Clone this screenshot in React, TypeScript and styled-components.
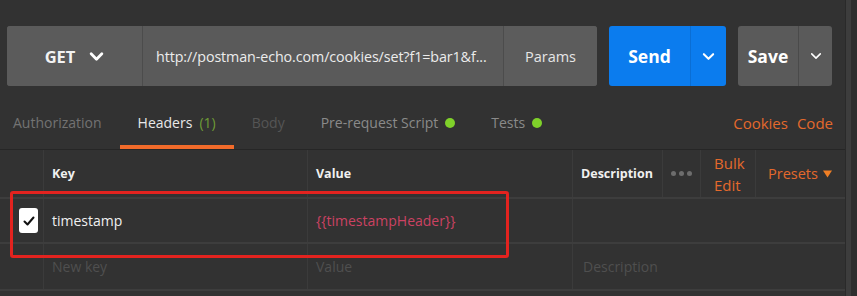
import React from 'react';
import styled, { createGlobalStyle } from 'styled-components';

const Global = createGlobalStyle`
  html, body {
    margin: 0;
    padding: 0;
    background: #333333;
  }
  * { box-sizing: border-box; }
`;

const Page = styled('div')`
  width: 857px;
  height: 296px;
  overflow: hidden;
  display: flex;
  background: #323232;
  font-family: "Open Sans", "Liberation Sans", sans-serif;
`;

const Main = styled('div')`
  flex: 1;
  position: relative;
  display: flex;
  flex-direction: column;
`;

const ScrollTrack = styled('div')`
  width: 6px;
  background: #3d3d3d;
  border-left: 1px solid #2a2a2a;
`;

const Edge = styled('div')`
  width: 6px;
  background: #2e2e2e;
`;

// REQUEST BAR
const RequestBar = styled('div')`
  display: flex;
  height: 60px;
  margin: 26px 0 0 7px;
  gap: 12px;
`;

const UrlGroup = styled('div')`
  display: flex;
  width: 590px;
  border-radius: 3px;
  overflow: hidden;
  background: #5a5a5a;
`;

const Method = styled('div')`
  width: 136px;
  display: flex;
  align-items: center;
  justify-content: center;
  gap: 14px;
  color: #f2f2f2;
  font-weight: 700;
  font-size: 16.5px;
  border-right: 1px solid #4c4c4c;
  background: #5b5b5b;
`;

const Url = styled('div')`
  flex: 1;
  display: flex;
  align-items: center;
  padding-left: 13px;
  color: #ececec;
  font-size: 14.3px;
  white-space: nowrap;
  overflow: hidden;
  letter-spacing: -0.1px;
`;

const Params = styled('div')`
  width: 94px;
  display: flex;
  align-items: center;
  justify-content: center;
  color: #e6e6e6;
  font-size: 14.5px;
  border-left: 1px solid #4c4c4c;
  background: #5c5c5c;
`;

const SplitButton = styled('div')<{ $bg: string; $w: number; $line: string }>`
  display: flex;
  width: ${p => p.$w}px;
  border-radius: 3px;
  background: ${p => p.$bg};
  color: #fff;
  overflow: hidden;
  & > div + div {
    border-left: 1px solid ${p => p.$line};
  }
`;

const ButtonLabel = styled('div')`
  flex: 1;
  display: flex;
  align-items: center;
  justify-content: center;
  font-size: 17.5px;
  font-weight: 700;
`;

const ButtonArrow = styled('div')<{ $w: number }>`
  width: ${p => p.$w}px;
  display: flex;
  align-items: center;
  justify-content: center;
`;

// TABS
const TabsRow = styled('div')`
  display: flex;
  align-items: stretch;
  height: 64px;
  padding: 14px 0 0 13px;
  border-bottom: 1px solid #262626;
`;

const Tab = styled('div')<{ $color: string; $active?: boolean }>`
  display: flex;
  align-items: center;
  gap: 7px;
  padding: 0 18px;
  font-size: 14px;
  color: ${p => p.$color};
  border-bottom: 4px solid ${p => (p.$active ? '#f26b2a' : 'transparent')};
  &:first-child {
    padding-left: 0;
  }
`;

const Count = styled('span')`
  color: #6f9c36;
`;

const Dot = styled('span')`
  width: 10px;
  height: 10px;
  border-radius: 50%;
  background: #7fd12a;
`;

const TabLinks = styled('div')`
  margin-left: auto;
  display: flex;
  align-items: center;
  gap: 9px;
  padding-right: 12px;
  padding-bottom: 4px;
  color: #e4692c;
  font-size: 15px;
`;

// TABLE
const Table = styled('div')`
  display: flex;
  flex-direction: column;
`;

const Row = styled('div')<{ $h: number }>`
  display: grid;
  grid-template-columns: 43px 264px 265px 90px 38px 55px 1fr;
  height: ${p => p.$h}px;
  border-bottom: 2px solid #3d3d3d;
`;

const Cell = styled('div')<{ $color?: string; $bold?: boolean; $size?: number }>`
  display: flex;
  align-items: center;
  padding-left: 8px;
  border-left: 1px solid #3b3b3b;
  color: ${p => p.$color || '#f0f0f0'};
  font-weight: ${p => (p.$bold ? 700 : 400)};
  font-size: ${p => p.$size || 14}px;
  white-space: nowrap;
  &:first-child {
    border-left: none;
    padding-left: 0;
    justify-content: center;
  }
`;

const Span = styled('div')<{ $cols: number }>`
  grid-column: span ${p => p.$cols};
  border-left: 1px solid #3b3b3b;
  display: flex;
  align-items: center;
  padding-left: 10px;
  color: #4f4f4f;
  font-size: 14px;
`;

const Dots = styled('div')`
  display: flex;
  gap: 3px;
  & > span {
    width: 5px;
    height: 5px;
    border-radius: 50%;
    background: #6d6d6d;
  }
`;

const BulkEdit = styled('div')`
  color: #e4692c;
  font-size: 15px;
  line-height: 22px;
  white-space: normal;
  padding-left: 5px;
`;

const Presets = styled('div')`
  display: flex;
  align-items: center;
  gap: 5px;
  color: #e4692c;
  font-size: 14.5px;
  padding-left: 4px;
`;

const Checkbox = styled('div')`
  width: 19px;
  height: 25px;
  margin-left: 14px;
  background: #ffffff;
  border-radius: 3px;
  display: flex;
  align-items: center;
  justify-content: center;
`;

const Highlight = styled('div')`
  position: absolute;
  left: 10px;
  top: 191px;
  width: 499px;
  height: 67px;
  border: 3px solid #e3231f;
  border-radius: 3px;
  pointer-events: none;
`;

const Chevron = ({ size = 14, stroke = 2.6 }: { size?: number; stroke?: number }) => (
  <svg width={size} height={size} viewBox="0 0 14 14">
    <path d="M2 4.5 L7 9.5 L12 4.5" fill="none" stroke="#fff" strokeWidth={stroke} strokeLinecap="round" strokeLinejoin="round" />
  </svg>
);

export default function App() {
  return (
    <>
      <Global />
      <Page>
        <Main>
          <RequestBar>
            <UrlGroup>
              <Method>
                GET
                <Chevron size={15} />
              </Method>
              <Url>http://postman-echo.com/cookies/set?f1=bar1&amp;f...</Url>
              <Params>Params</Params>
            </UrlGroup>
            <SplitButton $bg="#0b7cee" $w={117} $line="#0a6ed4">
              <ButtonLabel>Send</ButtonLabel>
              <ButtonArrow $w={36}>
                <Chevron size={13} stroke={2.2} />
              </ButtonArrow>
            </SplitButton>
            <SplitButton $bg="#5a5a5a" $w={94} $line="#4a4a4a">
              <ButtonLabel>Save</ButtonLabel>
              <ButtonArrow $w={34}>
                <Chevron size={12} stroke={1.8} />
              </ButtonArrow>
            </SplitButton>
          </RequestBar>

          <TabsRow>
            <Tab $color="#737373">Authorization</Tab>
            <Tab $color="#e8e8e8" $active>
              Headers <Count>(1)</Count>
            </Tab>
            <Tab $color="#555555">Body</Tab>
            <Tab $color="#8a8a8a">
              Pre-request Script <Dot />
            </Tab>
            <Tab $color="#8a8a8a">
              Tests <Dot />
            </Tab>
            <TabLinks>
              <span>Cookies</span>
              <span>Code</span>
            </TabLinks>
          </TabsRow>

          <Table>
            <Row $h={49}>
              <Cell />
              <Cell $bold $size={12.5}>Key</Cell>
              <Cell $bold $size={12.5}>Value</Cell>
              <Cell $bold $size={12.5}>Description</Cell>
              <Cell>
                <Dots>
                  <span />
                  <span />
                  <span />
                </Dots>
              </Cell>
              <Cell>
                <BulkEdit>Bulk Edit</BulkEdit>
              </Cell>
              <Cell>
                <Presets>
                  Presets
                  <svg width="9" height="8" viewBox="0 0 10 8">
                    <path d="M0 0 H10 L5 8 Z" fill="#f07f25" />
                  </svg>
                </Presets>
              </Cell>
            </Row>
            <Row $h={45}>
              <Cell>
                <Checkbox>
                  <svg width="12" height="12" viewBox="0 0 12 12">
                    <path d="M1.5 6.5 L4.5 9.5 L10.5 2.5" fill="none" stroke="#111" strokeWidth="2" strokeLinecap="round" strokeLinejoin="round" />
                  </svg>
                </Checkbox>
              </Cell>
              <Cell>timestamp</Cell>
              <Cell $color="#cc4262">{'{{timestampHeader}}'}</Cell>
              <Span $cols={4} />
            </Row>
            <Row $h={47}>
              <Cell />
              <Cell $color="#4f4f4f">New key</Cell>
              <Cell $color="#4f4f4f">Value</Cell>
              <Span $cols={4}>Description</Span>
            </Row>
          </Table>
          <Highlight />
        </Main>
        <ScrollTrack />
        <Edge />
      </Page>
    </>
  );
}
